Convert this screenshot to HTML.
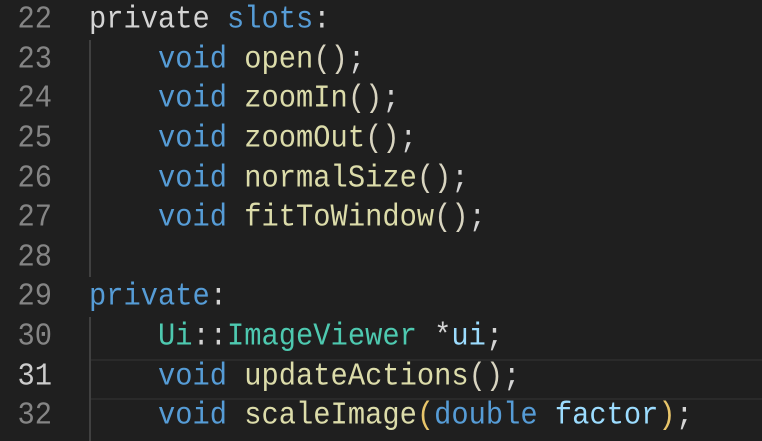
<!DOCTYPE html>
<html><head><style>
html,body{margin:0;padding:0;background:#1f1f1f;width:762px;height:441px;overflow:hidden}
.l{position:absolute;left:0;width:762px;height:39.6px;line-height:39.6px;font-family:"Liberation Mono","DejaVu Sans Mono",monospace;font-size:28.75px;color:#d4d4d4;white-space:pre}
.n{position:absolute;left:0;width:52px;text-align:right;color:#858585;transform:scaleY(1.1)}
.c{position:absolute;left:89px;transform:scaleY(1.1);transform-origin:50% 50%}
.k{color:#569cd6}.f{color:#dcdcaa}.t{color:#4ec9b0}.v{color:#9cdcfe}.p{color:#d8d4c0}
.g{position:absolute;left:89px;width:2px;background:#404040}
.cur{position:absolute;left:89px;right:0;top:359px;height:37px;border-top:2px solid #2a2a2a;border-bottom:2px solid #2a2a2a}
</style></head><body>
<div class="cur"></div>
<div class="g" style="top:40px;height:237px"></div>
<div class="g" style="top:317px;height:124px"></div>
<div class="l" style="top:0.2px"><span class="n">22</span><span class="c">private <span class="k">slots</span>:</span></div>
<div class="l" style="top:39.8px"><span class="n">23</span><span class="c">    <span class="k">void</span> <span class="f">open</span><span class="p">()</span>;</span></div>
<div class="l" style="top:79.4px"><span class="n">24</span><span class="c">    <span class="k">void</span> <span class="f">zoomIn</span><span class="p">()</span>;</span></div>
<div class="l" style="top:119px"><span class="n">25</span><span class="c">    <span class="k">void</span> <span class="f">zoomOut</span><span class="p">()</span>;</span></div>
<div class="l" style="top:158.6px"><span class="n">26</span><span class="c">    <span class="k">void</span> <span class="f">normalSize</span><span class="p">()</span>;</span></div>
<div class="l" style="top:198.2px"><span class="n">27</span><span class="c">    <span class="k">void</span> <span class="f">fitToWindow</span><span class="p">()</span>;</span></div>
<div class="l" style="top:237.8px"><span class="n">28</span></div>
<div class="l" style="top:277.4px"><span class="n">29</span><span class="c"><span class="k">private</span>:</span></div>
<div class="l" style="top:317px"><span class="n">30</span><span class="c">    <span class="t">Ui</span>::<span class="t">ImageViewer</span> *<span class="v">ui</span>;</span></div>
<div class="l" style="top:356.6px"><span class="n" style="color:#cccccc">31</span><span class="c">    <span class="k">void</span> <span class="f">updateActions</span><span class="p">()</span>;</span></div>
<div class="l" style="top:396.2px"><span class="n">32</span><span class="c">    <span class="k">void</span> <span class="f">scaleImage</span><span style="color:#e8c56a">(</span><span class="k">double</span> <span class="v">factor</span><span style="color:#e8c56a">)</span>;</span></div>
</body></html>
